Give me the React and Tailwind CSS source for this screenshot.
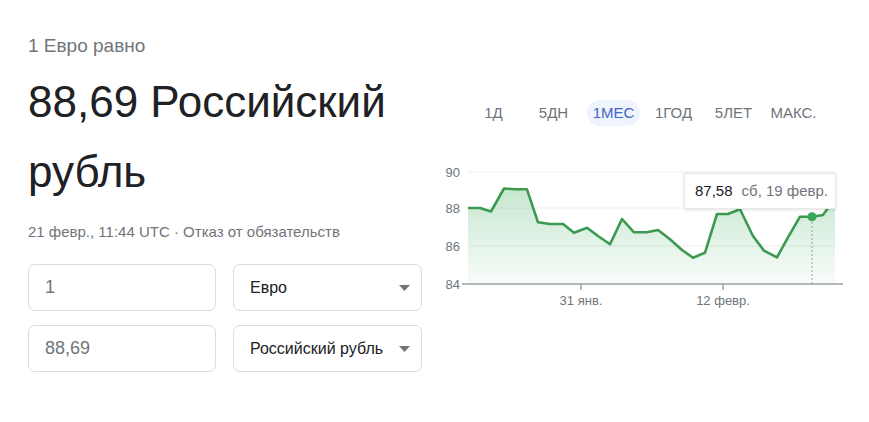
const points = [
  [468, 208], [480, 208], [491, 211.5], [504, 188.5], [515, 189.3], [527, 189.3],
  [538, 222.3], [550, 224], [563, 224], [574, 232.7], [587, 227.7], [598, 236],
  [610, 244.3], [622, 219], [634, 232.3], [647, 232.3], [658, 230], [670, 239.3],
  [682, 250], [693, 257.7], [705, 252.7], [717, 214], [728, 214], [740, 209.3],
  [753, 236], [764, 250.7], [777, 257.3], [788, 237.3], [800, 216.7], [812, 216.7],
  [823, 215], [828, 208], [835, 196],
];

const ranges = ['1Д', '5ДН', '1МЕС', '1ГОД', '5ЛЕТ', 'МАКС.'];

function Field({ children, muted }) {
  return (
    <div
      className={
        'w-[188px] h-[47px] border border-[#dadce0] rounded-[7px] flex items-center px-4 text-[18px] ' +
        (muted ? 'text-[#70757a]' : 'text-[#202124]')
      }
    >
      {children}
    </div>
  );
}

function Select({ label }) {
  return (
    <div className="w-[189px] h-[47px] border border-[#dadce0] rounded-[7px] flex items-center justify-between pl-4 pr-[11px] text-[16px] text-[#202124]">
      <span>{label}</span>
      <svg width="11" height="6" viewBox="0 0 11 6">
        <path d="M0 0h11L5.5 6z" fill="#757575" />
      </svg>
    </div>
  );
}

function Chart() {
  const line = points.map(([x, y], i) => (i ? 'L' : 'M') + x + ' ' + y).join(' ');
  const area = line + ' L835 284 L468 284 Z';
  return (
    <div className="relative w-[410px] h-[150px]">
      <svg width="410" height="150" viewBox="438 160 410 150" className="block">
        <defs>
          <linearGradient id="fill" x1="0" y1="0" x2="0" y2="1">
            <stop offset="0" stopColor="#34a853" stopOpacity="0.28" />
            <stop offset="1" stopColor="#34a853" stopOpacity="0.03" />
          </linearGradient>
          <clipPath id="plot">
            <rect x="460" y="160" width="376" height="130" />
          </clipPath>
        </defs>
        {[172, 208, 246].map((y) => (
          <line key={y} x1="468" x2="836" y1={y} y2={y} stroke="#eeeeee" strokeWidth="1" />
        ))}
        <g clipPath="url(#plot)">
          <path d={area} fill="url(#fill)" />
          <path d={line} fill="none" stroke="#3b9a50" strokeWidth="2.6" strokeLinejoin="round" />
        </g>
        <line x1="812" x2="812" y1="218" y2="284" stroke="#9aa0a6" strokeWidth="1" strokeDasharray="2 2" />
        <circle cx="812" cy="216.7" r="4.5" fill="#34a853" />
        <line x1="462" x2="843" y1="284" y2="284" stroke="#9aa0a6" strokeWidth="1.5" />
        <line x1="581" x2="581" y1="284" y2="290" stroke="#9aa0a6" strokeWidth="1.5" />
        <line x1="723" x2="723" y1="284" y2="290" stroke="#9aa0a6" strokeWidth="1.5" />
        <g fill="#70757a" fontSize="13" fontFamily="'Liberation Sans', Arial, sans-serif">
          {[[172, '90'], [208, '88'], [246, '86'], [284, '84']].map(([y, t]) => (
            <text key={t} x="460" y={y + 4.5} textAnchor="end">{t}</text>
          ))}
          <text x="581" y="305" textAnchor="middle">31 янв.</text>
          <text x="723" y="305" textAnchor="middle">12 февр.</text>
        </g>
      </svg>
      <div className="absolute left-[246px] top-[13px] w-[152px] h-[36px] bg-white border border-[#e8e8e8] shadow-[0_1px_3px_rgba(0,0,0,0.12)] flex items-center pl-[10px] gap-[9px] text-[15px] whitespace-nowrap">
        <span className="text-[#202124]">87,58</span>
        <span className="text-[#70757a]">сб, 19 февр.</span>
      </div>
    </div>
  );
}

export default function App() {
  return (
    <div className="w-[869px] h-[422px] bg-white flex font-['Liberation_Sans',Arial,sans-serif] overflow-hidden">
      <div className="pl-[28px] pt-[35px] w-[440px] shrink-0">
        <div className="text-[19px] leading-[22px] text-[#70757a]">1 Евро равно</div>
        <div className="mt-[10px] text-[44px] leading-[70px] text-[#202124]">
          88,69 Российский
          <br />
          рубль
        </div>
        <div className="mt-[15px] text-[15px] leading-[20px] text-[#70757a]">
          21 февр., 11:44 UTC · Отказ от обязательств
        </div>
        <div className="mt-[22px] flex flex-col gap-[14px]">
          <div className="flex gap-[17px]">
            <Field muted>1</Field>
            <Select label="Евро" />
          </div>
          <div className="flex gap-[17px]">
            <Field muted>88,69</Field>
            <Select label="Российский рубль" />
          </div>
        </div>
      </div>
      <div className="pt-[100px] flex flex-col">
        <div className="flex gap-[7px] pl-[27px]">
          {ranges.map((r) => (
            <div
              key={r}
              className={
                'w-[53px] h-[26px] rounded-full flex items-center justify-center text-[15px] ' +
                (r === '1МЕС' ? 'bg-[#eef3fc] text-[#3f67c6]' : 'text-[#70757a]')
              }
            >
              {r}
            </div>
          ))}
        </div>
        <div className="mt-[34px] -ml-[2px]">
          <Chart />
        </div>
      </div>
    </div>
  );
}
